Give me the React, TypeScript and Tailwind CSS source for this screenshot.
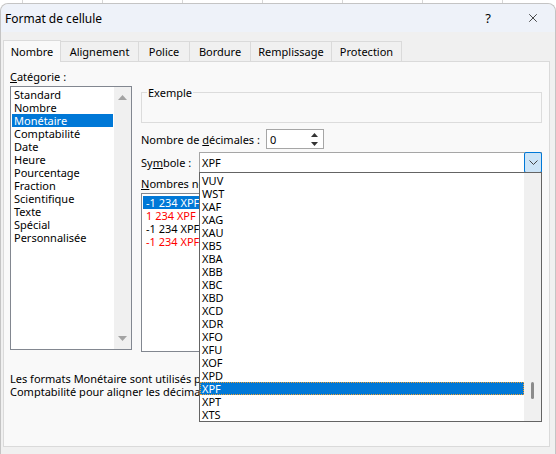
import { X } from 'lucide-react';

const categories = [
  'Standard', 'Nombre', 'Monétaire', 'Comptabilité', 'Date', 'Heure', 'Pourcentage',
  'Fraction', 'Scientifique', 'Texte', 'Spécial', 'Personnalisée',
];

const negatives = [
  { label: '-1 234 XPF', red: false, selected: true },
  { label: '1 234 XPF', red: true, selected: false },
  { label: '-1 234 XPF', red: false, selected: false },
  { label: '-1 234 XPF', red: true, selected: false },
];

const currencies = [
  'VUV', 'WST', 'XAF', 'XAG', 'XAU', 'XB5', 'XBA', 'XBB', 'XBC', 'XBD',
  'XCD', 'XDR', 'XFO', 'XFU', 'XOF', 'XPD', 'XPF', 'XPT', 'XTS',
];

const tabs = [
  { label: 'Nombre', w: 'w-[58px]' },
  { label: 'Alignement', w: 'w-[78px]' },
  { label: 'Police', w: 'w-[51px]' },
  { label: 'Bordure', w: 'w-[61px]' },
  { label: 'Remplissage', w: 'w-[81px]' },
  { label: 'Protection', w: 'w-[70px]' },
];

function Triangle({ down, className }: { down?: boolean; className?: string }) {
  return (
    <svg width="9" height="5" viewBox="0 0 9 5" className={className}>
      {down ? <path d="M0 0 H9 L4.5 5 Z" fill="currentColor" /> : <path d="M0 5 H9 L4.5 0 Z" fill="currentColor" />}
    </svg>
  );
}

export default function App() {
  return (
    <div className="w-[556px] h-[454px] overflow-hidden bg-white font-['Noto_Sans',sans-serif] text-[11px] leading-[13px] text-black">
      {/* sheet behind the dialog */}
      <div className="flex h-[3px]">
        <div className="w-[23px] shrink-0 border-r border-[#d6d6d6]" />
        {[0, 1, 2, 3, 4, 5, 6].map((i) => (
          <div key={i} className="w-[80px] shrink-0 border-r border-[#d6d6d6]" />
        ))}
      </div>

      <div className="h-[451px] flex flex-col bg-[#f0f0f0] rounded-t-[8px] border-t border-x border-[#c4c4c4]">
        {/* title bar */}
        <div className="h-[28px] shrink-0 flex items-center bg-[#eef2f9] rounded-t-[8px] pl-[4px]">
          <span className="text-[12px]">Format de cellule</span>
          <span className="ml-auto text-[13px] w-[10px] text-center">?</span>
          <X className="w-[14px] h-[14px] ml-[33px] mr-[15px]" strokeWidth={1.2} />
        </div>

        {/* tabs */}
        <div className="h-[29px] shrink-0 flex items-end pl-[2px]">
          {tabs.map((t, i) =>
            i === 0 ? (
              <div
                key={t.label}
                className={`${t.w} h-[22px] -mb-px z-10 flex items-center justify-center bg-[#f9f9f9] border-t border-x border-[#dadada]`}
              >
                {t.label}
              </div>
            ) : (
              <div
                key={t.label}
                className={`${t.w} h-[20px] flex items-center justify-center border-t border-r border-[#dadada]`}
              >
                {t.label}
              </div>
            )
          )}
        </div>

        {/* tab panel */}
        <div className="relative h-[386px] ml-[2px] mr-[5px] bg-[#f9f9f9] border border-[#dadada] pl-[6px] pt-[8px]">
          <div className="flex">
            {/* category column */}
            <div className="w-[122px] shrink-0">
              <div>
                <span className="underline">C</span>atégorie :
              </div>
              <div className="mt-[3px] h-[264px] flex bg-white border border-[#828790]">
                <div className="flex-1 pt-[1px] px-[1px]">
                  {categories.map((c) => (
                    <div
                      key={c}
                      className={`h-[13px] pl-[2px] whitespace-nowrap ${c === 'Monétaire' ? 'bg-[#0078d7] text-white' : ''}`}
                    >
                      {c}
                    </div>
                  ))}
                </div>
                <div className="w-[17px] flex flex-col items-center justify-between bg-[#f0f0f0] py-[8px] text-[#a3a3a3]">
                  <Triangle />
                  <Triangle down />
                </div>
              </div>
            </div>

            {/* right column */}
            <div className="ml-[9px] w-[401px]">
              <fieldset className="mt-[16px] h-[37px] border border-[#dcdcdc]">
                <legend className="ml-[5px] px-[1px]">Exemple</legend>
              </fieldset>

              <div className="mt-[6px] flex items-center h-[20px]">
                <div className="w-[125px]">
                  Nombre de <span className="underline">d</span>écimales :
                </div>
                <div className="w-[58px] h-[20px] flex bg-white border border-[#a6a6a6]">
                  <div className="flex-1 pl-[3px] flex items-center">0</div>
                  <div className="w-[17px] flex flex-col">
                    <div className="flex-1 flex items-center justify-center text-[#333]">
                      <Triangle className="w-[7px] h-[4px]" />
                    </div>
                    <div className="flex-1 flex items-center justify-center text-[#333]">
                      <Triangle down className="w-[7px] h-[4px]" />
                    </div>
                  </div>
                </div>
              </div>

              <div className="mt-[3px] flex items-center h-[21px]">
                <div className="w-[58px]">
                  Sy<span className="underline">m</span>bole :
                </div>
                <div className="flex-1 h-[21px] flex bg-white border border-[#a6a6a6]">
                  <div className="flex-1 pl-[2px] flex items-center">XPF</div>
                  <div className="w-[18px] -mt-px -mr-px -mb-px flex items-center justify-center bg-[#cce4f7] border border-[#0078d7] rounded-[2px]">
                    <svg width="9" height="5" viewBox="0 0 9 5">
                      <path d="M0.5 0.5 L4.5 4.5 L8.5 0.5" fill="none" stroke="#444" strokeWidth="1" />
                    </svg>
                  </div>
                </div>
              </div>

              {/* label and list run on under the open drop-down; only the visible part is drawn */}
              <div className="mt-[4px] w-[58px] overflow-hidden whitespace-nowrap">
                <span className="underline">N</span>ombres négatifs :
              </div>
              <div className="mt-[3px] w-[190px] h-[159px] bg-white border border-[#828790] pt-[2px] pl-[1px]">
                <div className="w-[56px] overflow-hidden">
                  {negatives.map((n, i) => (
                    <div
                      key={i}
                      className={`h-[13px] pl-[3px] whitespace-nowrap ${n.selected ? 'bg-[#0078d7] text-white' : n.red ? 'text-[#ff0000]' : ''}`}
                    >
                      {n.label}
                    </div>
                  ))}
                </div>
              </div>
            </div>
          </div>

          <div className="mt-[20px] w-[189px] overflow-hidden whitespace-nowrap">
            <div>Les formats Monétaire sont utilisés pour les valeurs monétaires générales. Utilisez les formats</div>
            <div>Comptabilité pour aligner les décimales dans une colonne.</div>
          </div>

          {/* open symbol drop-down */}
          <div className="absolute left-[195px] top-[110px] z-20 w-[343px] h-[250px] flex bg-white border border-[#646464]">
            <div className="flex-1 pt-[1px]">
              {currencies.map((c) => (
                <div
                  key={c}
                  className={`h-[13px] pl-[2px] ${c === 'XPF' ? 'bg-[#0078d7] text-white outline outline-1 -outline-offset-1 outline-dotted outline-[#f0a030]' : ''}`}
                >
                  {c}
                </div>
              ))}
            </div>
            <div className="w-[17px] bg-[#f0f0f0] pl-[7px] pt-[209px]">
              <div className="w-[3px] h-[17px] rounded-full bg-[#8b8b8b]" />
            </div>
          </div>
        </div>
      </div>
    </div>
  );
}
